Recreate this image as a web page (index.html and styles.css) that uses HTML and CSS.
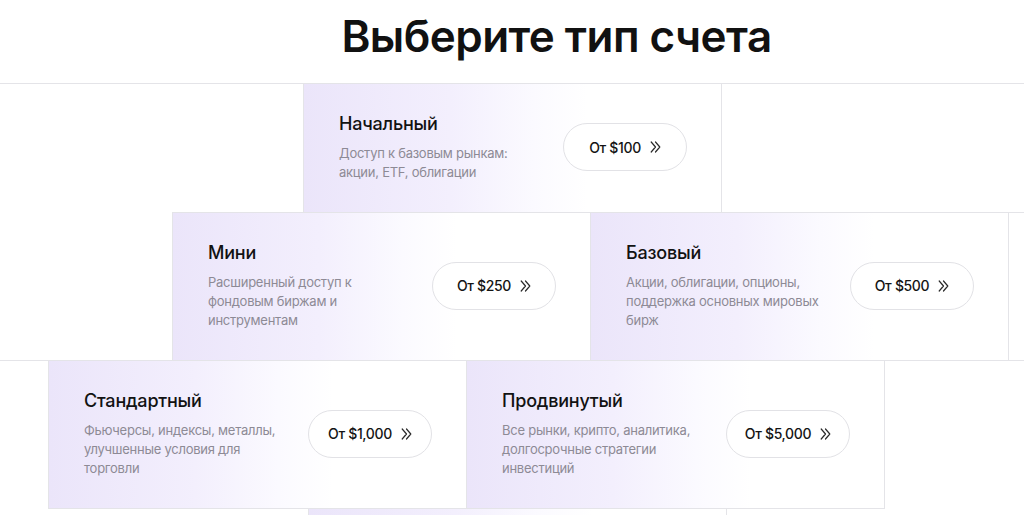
FILE: index.html
```html
<!DOCTYPE html>
<html lang="ru">
<head>
<meta charset="utf-8">
<title>Выберите тип счета</title>
<link rel="stylesheet" href="styles.css">
</head>
<body>
<header class="header">
  <h1 class="header__title">Выберите тип счета</h1>
</header>
<main class="stack">
  <div class="row row--1">
    <div class="card">
      <div class="card__text">
        <h2 class="card__title">Начальный</h2>
        <p class="card__desc">Доступ к базовым рынкам: акции, ETF, облигации</p>
      </div>
      <a class="price" href="#">От $100 <svg class="price__icon" viewBox="0 0 11 12" width="11" height="12"><path d="M1.2 1l4.3 5-4.3 5M5.5 1l4.3 5-4.3 5"/></svg></a>
    </div>
  </div>
  <div class="row row--2">
    <div class="card">
      <div class="card__text">
        <h2 class="card__title">Мини</h2>
        <p class="card__desc">Расширенный доступ к фондовым биржам и инструментам</p>
      </div>
      <a class="price" href="#">От $250 <svg class="price__icon" viewBox="0 0 11 12" width="11" height="12"><path d="M1.2 1l4.3 5-4.3 5M5.5 1l4.3 5-4.3 5"/></svg></a>
    </div>
    <div class="card">
      <div class="card__text">
        <h2 class="card__title">Базовый</h2>
        <p class="card__desc">Акции, облигации, опционы, поддержка основных мировых бирж</p>
      </div>
      <a class="price" href="#">От $500 <svg class="price__icon" viewBox="0 0 11 12" width="11" height="12"><path d="M1.2 1l4.3 5-4.3 5M5.5 1l4.3 5-4.3 5"/></svg></a>
    </div>
    <div class="ghost ghost--boxed"></div>
  </div>
  <div class="row row--3">
    <div class="ghost ghost--lead"></div>
    <div class="card">
      <div class="card__text">
        <h2 class="card__title">Стандартный</h2>
        <p class="card__desc">Фьючерсы, индексы, металлы, улучшенные условия для торговли</p>
      </div>
      <a class="price" href="#">От $1,000 <svg class="price__icon" viewBox="0 0 11 12" width="11" height="12"><path d="M1.2 1l4.3 5-4.3 5M5.5 1l4.3 5-4.3 5"/></svg></a>
    </div>
    <div class="card">
      <div class="card__text">
        <h2 class="card__title">Продвинутый</h2>
        <p class="card__desc">Все рынки, крипто, аналитика, долгосрочные стратегии инвестиций</p>
      </div>
      <a class="price" href="#">От $5,000 <svg class="price__icon" viewBox="0 0 11 12" width="11" height="12"><path d="M1.2 1l4.3 5-4.3 5M5.5 1l4.3 5-4.3 5"/></svg></a>
    </div>
    <div class="ghost ghost--tail"></div>
  </div>
  <div class="row row--4">
    <div class="card card--empty"></div>
  </div>
</main>
</body>
</html>
```
FILE: styles.css
```css
* { box-sizing: border-box; }

html, body {
  margin: 0;
  padding: 0;
  background: #ffffff;
}

body {
  width: 1024px;
  height: 515px;
  overflow: hidden;
  font-family: Inter, "Noto Sans", "Liberation Sans", sans-serif;
  color: #121212;
}

.header {
  position: relative;
  z-index: 2;
  height: 84px;
  border-bottom: 1px solid #e4e4e8;
  background: #ffffff;
}

.header__title {
  margin: 0;
  padding: 0 0 0 89px;
  text-align: center;
  font-size: 44px;
  line-height: 72px;
  font-weight: 600;
  letter-spacing: -0.55px;
  color: #111111;
}

.stack {
  display: flex;
  flex-direction: column;
}

.row {
  display: flex;
  margin-top: -1px;
  width: 1024px;
}

.row--1 { padding-left: 303px; }
.row--2 { padding-left: 172px; }
.row--3 { padding-left: 0; }
.row--4 { padding-left: 308px; }

.card {
  flex: 0 0 419px;
  display: flex;
  align-items: center;
  padding: 28px 34px 30px 35px;
  border: 1px solid #e4e4e8;
  background: linear-gradient(90deg, #ebe5fa 0%, #f3effd 35%, #fbfaff 55%, #ffffff 68%);
}

.card--empty {
  height: 60px;
  border-bottom: 0;
}

.card + .card { margin-left: -1px; }

.ghost {
  flex: 1 1 auto;
  border-top: 1px solid #e4e4e8;
}

.ghost--boxed {
  border-bottom: 1px solid #e4e4e8;
  margin-left: -1px;
  border-left: 1px solid #e4e4e8;
}

.ghost--lead {
  flex: 0 0 48px;
}

.ghost--tail {
  margin-left: -1px;
}

.card__text {
  flex: 0 0 204px;
}

.card__title {
  margin: 0;
  font-size: 18px;
  line-height: 24px;
  font-weight: 500;
  letter-spacing: -0.2px;
  color: #121212;
}

.card__desc {
  margin: 8px 0 0;
  font-size: 13px;
  line-height: 19px;
  font-weight: 400;
  letter-spacing: -0.25px;
  color: #8d8a95;
}

.price {
  margin-left: auto;
  flex: 0 0 124px;
  height: 48px;
  display: flex;
  align-items: center;
  justify-content: center;
  gap: 9px;
  border: 1px solid #e2e2e6;
  border-radius: 24px;
  background: #ffffff;
  font-size: 14px;
  font-weight: 500;
  letter-spacing: -0.35px;
  color: #141414;
  text-decoration: none;
}

.price__icon {
  fill: none;
  stroke: #2a2a2a;
  stroke-width: 1.2;
  stroke-linecap: round;
  stroke-linejoin: round;
}
```
